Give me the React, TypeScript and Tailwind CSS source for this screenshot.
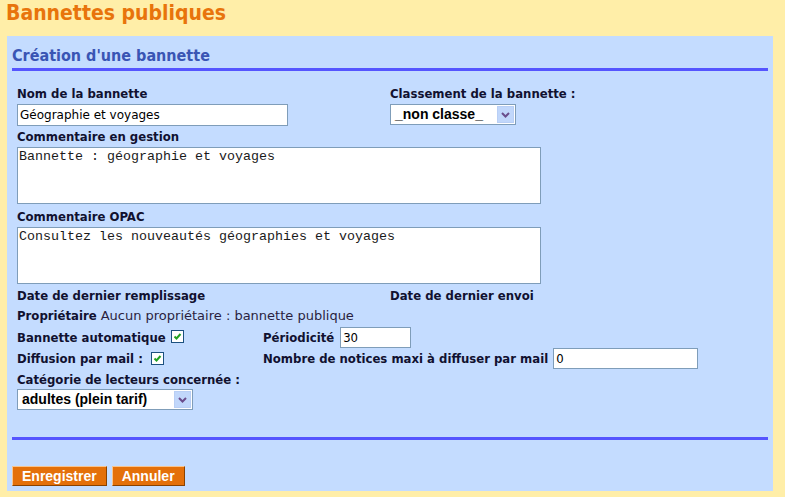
import React from "react";

const label = "font-['DejaVu_Sans_Condensed',sans-serif] text-[13px] leading-[16px] font-bold text-[#111130]";

const Checkbox = () => (
  <span className="inline-flex w-[13px] h-[13px] bg-white border border-[#1c5180] items-center justify-center">
    <svg width="9" height="9" viewBox="0 0 9 9">
      <path d="M1.5 4.5 L3.5 6.5 L7.5 2" stroke="#21a121" strokeWidth="2" fill="none" />
    </svg>
  </span>
);

const Select = ({ value, width }: { value: string; width: string }) => (
  <div className={`flex items-center h-[21px] bg-white border border-[#7f9db9] ${width}`}>
    <span className="flex-1 pl-[4px] font-['Liberation_Sans',sans-serif] font-bold text-[14px] leading-[19px] text-black whitespace-nowrap overflow-hidden">
      {value}
    </span>
    <span className="w-[17px] h-[17px] mr-[1px] bg-[#c1d7fb] border border-[#b9cff5] flex items-center justify-center">
      <svg width="9" height="6" viewBox="0 0 9 6">
        <path d="M1 1 L4.5 4.5 L8 1" stroke="#6a4d8c" strokeWidth="2" fill="none" />
      </svg>
    </span>
  </div>
);

const textareaCls =
  "block mt-[2px] w-[524px] h-[57px] border border-[#7f9db9] bg-white px-[1px] py-[1px] font-['Liberation_Mono',monospace] text-[13.33px] leading-[16px] text-[#1a1a1a] resize-none outline-none";

const smallInput =
  "h-[21px] border border-[#7f9db9] bg-white px-[2px] font-['DejaVu_Sans_Condensed',sans-serif] text-[13px] text-black outline-none";

const App = () => {
  return (
    <div className="w-[785px] h-[497px] bg-[#ffeea8] overflow-hidden">
      <h1 className="pl-[6px] h-[36px] font-['DejaVu_Sans_Condensed',sans-serif] font-bold text-[21px] leading-[26px] text-[#e8740c]">
        Bannettes publiques
      </h1>

      <div className="ml-[7px] w-[766px] h-[455px] bg-[#c4dcff] pt-[10px] px-[5px]">
        <h2 className="font-['DejaVu_Sans_Condensed',sans-serif] font-bold text-[16px] leading-[20px] text-[#3a55b4]">
          Création d'une bannette
        </h2>
        <div className="mt-[2px] h-[3px] bg-[#5555ff]" />

        <div className="px-[5px] mt-[15px]">
          {/* nom + classement */}
          <div className="grid grid-cols-[373px_1fr]">
            <div>
              <div className={label}>Nom de la bannette</div>
              <input
                defaultValue="Géographie et voyages"
                className="block mt-[2px] w-[271px] h-[22px] border border-[#7f9db9] bg-white px-[2px] font-['DejaVu_Sans',sans-serif] text-[12px] text-black outline-none"
              />
            </div>
            <div>
              <div className={label}>Classement de la bannette :</div>
              <div className="mt-[2px]">
                <Select value="_non classe_" width="w-[126px]" />
              </div>
            </div>
          </div>

          {/* commentaires */}
          <div className={`${label} mt-[3px]`}>Commentaire en gestion</div>
          <textarea defaultValue="Bannette : géographie et voyages" className={textareaCls} />
          <div className={`${label} mt-[5px]`}>Commentaire OPAC</div>
          <textarea defaultValue="Consultez les nouveautés géographies et voyages" className={textareaCls} />

          {/* dates */}
          <div className="grid grid-cols-[373px_1fr] mt-[4px]">
            <div className={label}>Date de dernier remplissage</div>
            <div className={label}>Date de dernier envoi</div>
          </div>

          <div className="mt-[4px] flex items-baseline">
            <span className={label}>Propriétaire</span>
            <span className="ml-[4px] font-['DejaVu_Sans',sans-serif] text-[13px] leading-[16px] text-[#2a1f40]">
              Aucun propriétaire : bannette publique
            </span>
          </div>

          {/* options */}
          <div className="grid grid-cols-[246px_1fr] h-[21px] mt-[3px] items-center">
            <div className="flex items-center">
              <span className={label}>Bannette automatique</span>
              <span className="ml-[5px] -mt-[3px] flex"><Checkbox /></span>
            </div>
            <div className="flex items-center">
              <span className={label}>Périodicité</span>
              <input defaultValue="30" className={`ml-[6px] w-[71px] ${smallInput}`} />
            </div>
          </div>
          <div className="grid grid-cols-[246px_1fr] h-[21px] items-center">
            <div className="flex items-center">
              <span className={label}>Diffusion par mail :</span>
              <span className="ml-[8px] flex"><Checkbox /></span>
            </div>
            <div className="flex items-center">
              <span className={label}>Nombre de notices maxi à diffuser par mail</span>
              <input defaultValue="0" className={`ml-[5px] w-[145px] ${smallInput}`} />
            </div>
          </div>

          <div className={`${label} mt-[3px]`}>Catégorie de lecteurs concernée :</div>
          <div className="mt-[1px]">
            <Select value="adultes (plein tarif)" width="w-[176px]" />
          </div>
        </div>

        <div className="mt-[27px] h-[3px] bg-[#5555ff]" />

        <div className="mt-[26px] flex gap-[5px]">
          <button className="h-[20px] px-[9px] bg-[#e4700a] border border-t-[#f8c48e] border-l-[#f8c48e] border-b-[#8a4200] border-r-[#8a4200] font-['Liberation_Sans',sans-serif] font-bold text-[14px] leading-[18px] text-white">
            Enregistrer
          </button>
          <button className="h-[20px] px-[9px] bg-[#e4700a] border border-t-[#f8c48e] border-l-[#f8c48e] border-b-[#8a4200] border-r-[#8a4200] font-['Liberation_Sans',sans-serif] font-bold text-[14px] leading-[18px] text-white">
            Annuler
          </button>
        </div>
      </div>
    </div>
  );
};

export default App;
